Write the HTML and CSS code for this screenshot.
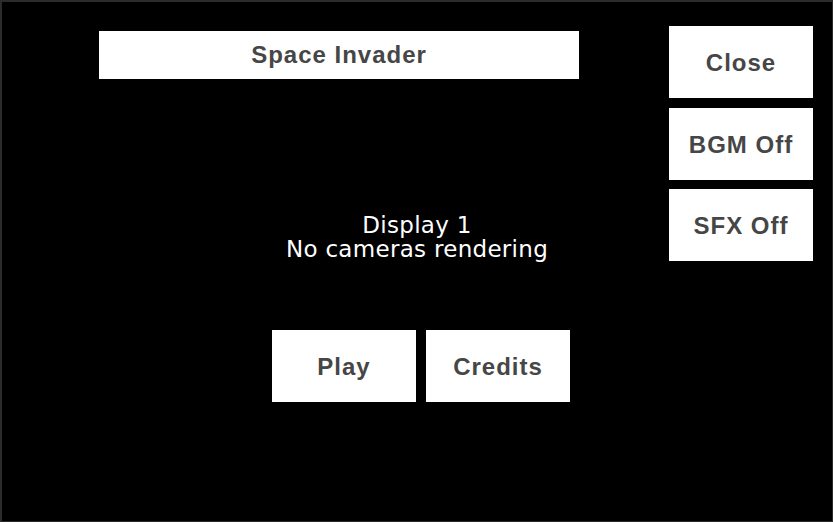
FILE: index.html
```html
<!DOCTYPE html>
<html lang="en">
<head>
<meta charset="UTF-8">
<meta name="viewport" content="width=device-width, initial-scale=1.0">
<title>Space Invader</title>
<link rel="stylesheet" href="styles.css">
</head>
<body>
<div class="stage">
  <div class="main">
    <div class="title">Space Invader</div>
    <div class="message">
      <div>Display 1</div>
      <div>No cameras rendering</div>
    </div>
    <div class="menu">
      <button class="btn">Play</button>
      <button class="btn">Credits</button>
    </div>
  </div>
  <div class="side">
    <button class="btn">Close</button>
    <button class="btn">BGM Off</button>
    <button class="btn">SFX Off</button>
  </div>
</div>
</body>
</html>
```

FILE: styles.css
```css
/* Page frame */
html, body {
  margin: 0;
  padding: 0;
  background: #000;
}

.stage {
  width: 833px;
  height: 522px;
  box-sizing: border-box;
  border-style: solid;
  border-color: #2b2b2b;
  border-width: 2px 1px 1px 2px;
  background: #000;
  display: grid;
  grid-template-columns: 1fr 144px;
  padding-right: 19px;
}

/* Left area: title, camera message, menu */
.main {
  display: flex;
  flex-direction: column;
  align-items: flex-start;
}

.title {
  margin: 29px 0 0 97px;
  width: 480px;
  height: 48px;
  background: #fff;
  color: #464646;
  font-family: "Liberation Sans", Arial, sans-serif;
  font-weight: bold;
  font-size: 24px;
  letter-spacing: 1px;
  display: flex;
  align-items: center;
  justify-content: center;
}

.message {
  margin: 134px 0 0 215px;
  width: 400px;
  text-align: center;
  color: #fff;
  font-family: "DejaVu Sans", sans-serif;
  font-size: 23px;
  letter-spacing: 0.3px;
  line-height: 24px;
}

.menu {
  margin: 69px 0 0 270px;
  display: flex;
  gap: 10px;
}

/* Right column */
.side {
  margin-top: 24px;
  display: flex;
  flex-direction: column;
  gap: 10px;
}

.side .btn:last-child {
  margin-top: -1px;
}

.btn {
  width: 144px;
  height: 72px;
  border: none;
  padding: 2px 0 0;
  background: #fff;
  color: #464646;
  font-family: "Liberation Sans", Arial, sans-serif;
  font-weight: bold;
  font-size: 24px;
  letter-spacing: 1px;
  cursor: pointer;
}
```
